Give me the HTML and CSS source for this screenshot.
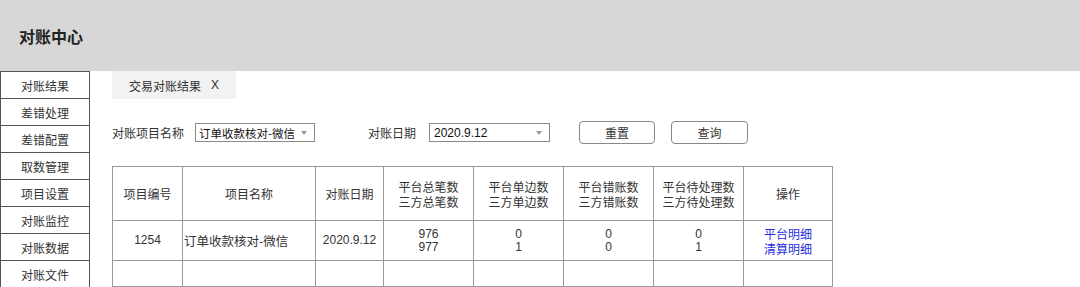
FILE: index.html
```html
<!DOCTYPE html>
<html lang="zh">
<head>
<meta charset="utf-8">
<link rel="stylesheet" href="styles.css">
</head>
<body>
<header class="topbar"><h1 class="title">对账中心</h1></header>
<div class="layout">
  <nav class="sidebar">
    <div class="nav-item">对账结果</div>
    <div class="nav-item">差错处理</div>
    <div class="nav-item">差错配置</div>
    <div class="nav-item">取数管理</div>
    <div class="nav-item">项目设置</div>
    <div class="nav-item">对账监控</div>
    <div class="nav-item">对账数据</div>
    <div class="nav-item">对账文件</div>
  </nav>
  <main class="main">
    <div class="tabs"><div class="tab">交易对账结果<span class="tab-x">X</span></div></div>
    <div class="filters">
      <span class="label label-name">对账项目名称</span>
      <div class="select select-name"><span>订单收款核对-微信</span><i class="arrow"></i></div>
      <span class="label label-date">对账日期</span>
      <div class="select select-date"><span>2020.9.12</span><i class="arrow"></i></div>
      <button class="btn btn-reset">重置</button>
      <button class="btn btn-query">查询</button>
    </div>
    <table class="grid">
      <colgroup>
        <col style="width:70px"><col style="width:133px"><col style="width:68px">
        <col style="width:90px"><col style="width:90px"><col style="width:90px">
        <col style="width:90px"><col style="width:89px">
      </colgroup>
      <tr class="head">
        <td>项目编号</td><td>项目名称</td><td>对账日期</td>
        <td>平台总笔数<br>三方总笔数</td><td>平台单边数<br>三方单边数</td>
        <td>平台错账数<br>三方错账数</td><td>平台待处理数<br>三方待处理数</td><td>操作</td>
      </tr>
      <tr class="data">
        <td>1254</td><td class="left">订单收款核对-微信</td><td>2020.9.12</td>
        <td>976<br>977</td><td>0<br>1</td><td>0<br>0</td><td>0<br>1</td>
        <td class="ops"><a class="link">平台明细</a><br><a class="link">清算明细</a></td>
      </tr>
      <tr class="empty">
        <td></td><td></td><td></td><td></td><td></td><td></td><td></td><td></td>
      </tr>
    </table>
  </main>
</div>
</body>
</html>
```
FILE: styles.css
```css
* { box-sizing: border-box; }
html, body { margin: 0; padding: 0; background: #fff; }
body {
  font-family: "Noto Sans CJK SC", "Liberation Sans", sans-serif;
  font-size: 12px;
  color: #333;
  width: 1080px;
  height: 287px;
  overflow: hidden;
}
.topbar {
  height: 71px;
  background: #d7d7d7;
  display: flex;
  align-items: center;
  padding-left: 19px;
}
.title {
  margin: 0;
  font-size: 16px;
  font-weight: bold;
  color: #222;
  padding-top: 1px;
}
.layout { display: flex; }
.sidebar {
  width: 90px;
  border-left: 1px solid #555;
  border-right: 1px solid #555;
}
.nav-item {
  height: 27px;
  border-top: 1px solid #555;
  display: flex;
  align-items: center;
  justify-content: center;
  color: #333;
}
.main { padding-left: 22px; flex: 1; }
.tabs { display: flex; }
.tab {
  width: 124px;
  height: 28px;
  background: #f2f2f2;
  display: flex;
  align-items: center;
  justify-content: center;
  color: #333;
}
.tab-x { margin-left: 10px; font-family: "Liberation Sans", sans-serif; font-size: 12px; }
.filters {
  display: flex;
  align-items: center;
  height: 23px;
  margin-top: 22px;
}
.label { color: #333; white-space: nowrap; }
.label-name { width: 72px; }
.select {
  height: 19px;
  border: 1px solid #8a8a8a;
  display: flex;
  align-items: center;
  padding-left: 4px;
  position: relative;
  color: #111;
  margin-left: 11px;
  white-space: nowrap;
}
.select-name { width: 120px; padding-left: 3px; font-size: 11.5px; }
.select-date { width: 121px; font-family: "Liberation Sans", sans-serif; font-size: 12px; }
.label-date { margin-left: 53px; width: 50px; }
.arrow {
  position: absolute;
  right: 7px;
  top: 7px;
  width: 0; height: 0;
  border-left: 3px solid transparent;
  border-right: 3px solid transparent;
  border-top: 4px solid #999;
}
.btn {
  height: 23px;
  border: 1px solid #888;
  border-radius: 4px;
  background: #fff;
  font-family: inherit;
  font-size: 12px;
  color: #333;
  padding: 0;
}
.btn-reset { width: 76px; margin-left: 29px; }
.btn-query { width: 77px; margin-left: 16px; }
.grid {
  margin-top: 22px;
  border-collapse: collapse;
  table-layout: fixed;
  width: 720px;
}
.grid td {
  border: 1px solid #999;
  text-align: center;
  padding: 0;
  line-height: 15px;
  color: #333;
}
.grid .head td { height: 54px; }
.grid .data td { height: 40px; font-family: "Liberation Sans", "Noto Sans CJK SC", sans-serif; font-size: 12px; line-height: 13px; }
.grid .data td.left { text-align: left; font-family: "Noto Sans CJK SC", sans-serif; font-size: 12.5px; padding-left: 1px; }
.grid .data td.ops { font-family: "Noto Sans CJK SC", sans-serif; font-size: 12px; line-height: 15px; }
.grid .empty td { height: 26px; }
.link { color: #1f2fe0; }
```
